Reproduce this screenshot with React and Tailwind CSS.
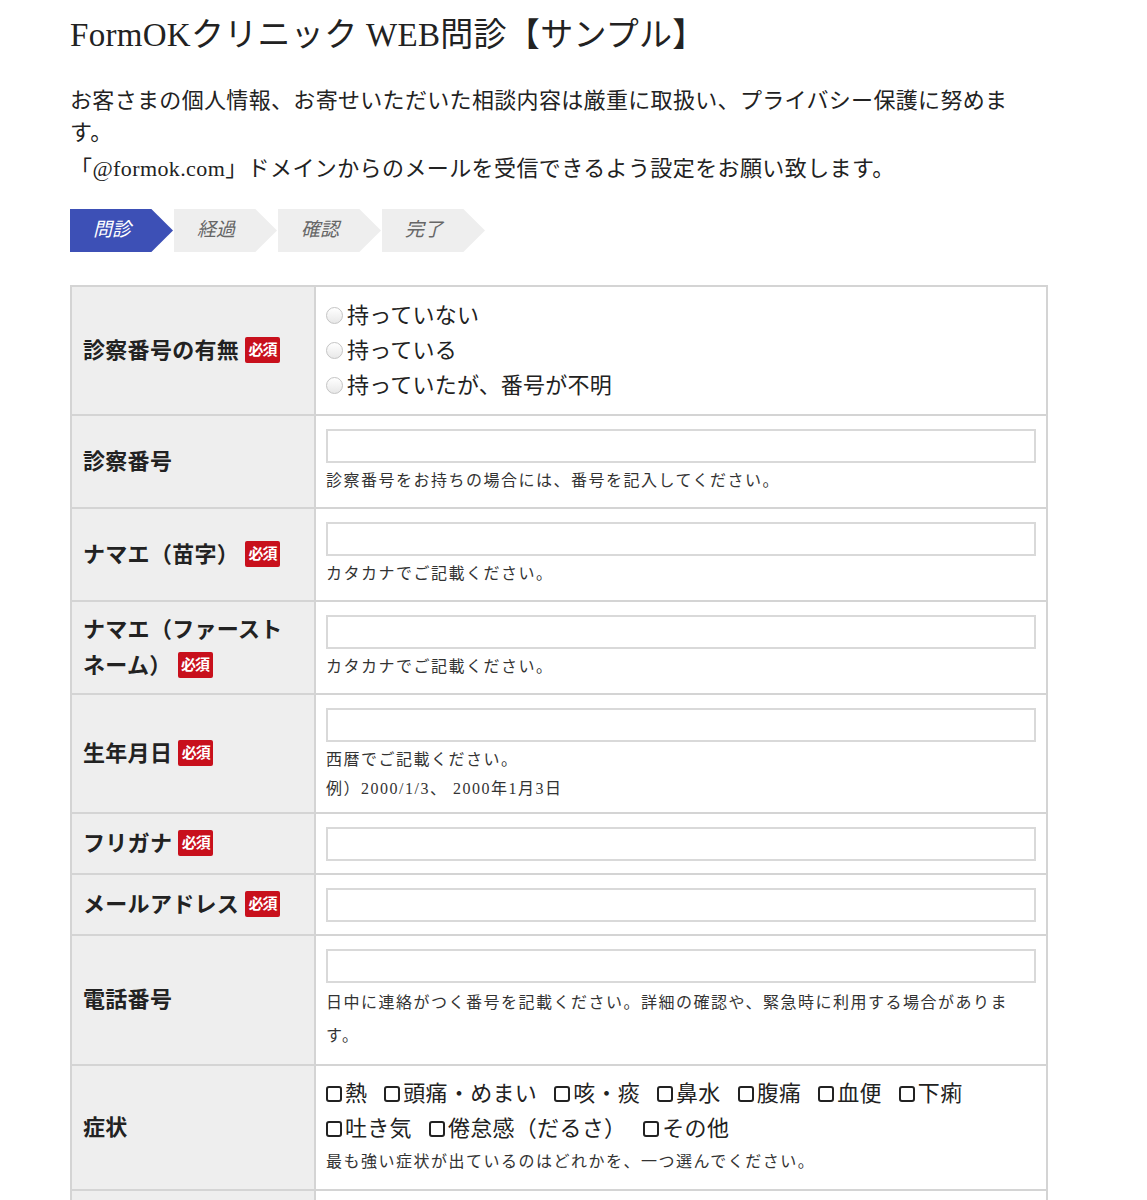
const radioOptions = ["持っていない", "持っている", "持っていたが、番号が不明"];

const symptoms = [
  "熱",
  "頭痛・めまい",
  "咳・痰",
  "鼻水",
  "腹痛",
  "血便",
  "下痢",
  "吐き気",
  "倦怠感（だるさ）",
  "その他",
];

const steps = ["問診", "経過", "確認", "完了"];

function Badge() {
  return (
    <span className="inline-block align-middle ml-[6px] w-[35px] h-[26px] leading-[26px] text-center rounded-[2px] bg-[#c8101c] text-white text-[15px] font-bold tracking-[-1px] relative top-[-2px]">
      必須
    </span>
  );
}

function TextBox() {
  return <div className="h-[34px] w-full border-2 border-[#d9d9d9] bg-white"></div>;
}

function Help({ children, leading = "leading-[29px]" }) {
  return (
    <p className={`mt-[3px] text-[16px] tracking-[1.5px] text-[#333] ${leading}`}>
      {children}
    </p>
  );
}

function Row({ label, required, children, pad = "pt-[13px] pb-[12px]", first }) {
  return (
    <div className={`flex ${first ? "" : "border-t-2 border-[#d4d4d4]"}`}>
      <div className="w-[244px] shrink-0 bg-[#eeeeee] border-r-2 border-[#d4d4d4] flex items-center pl-[11px] pr-[12px]">
        <div className="text-[22px] font-bold leading-[36px] tracking-[0.3px] text-[#222]">
          {label}
          {required && <Badge />}
        </div>
      </div>
      <div className={`flex-1 pl-[10px] pr-[10px] ${pad}`}>{children}</div>
    </div>
  );
}

export default function App() {
  return (
    <div className="min-h-[1200px] bg-white text-[#222] font-['Liberation_Serif','Noto_Sans_CJK_JP',serif]">
      <div className="w-[978px] ml-[70px] pt-[14px]">
        <h1 className="text-[33px] leading-[42px] font-normal tracking-[0.3px] text-[#222]">
          FormOKクリニック WEB問診【サンプル】
        </h1>

        <p className="mt-[29px] text-[22px] leading-[32px] tracking-[0.33px]">
          お客さまの個人情報、お寄せいただいた相談内容は厳重に取扱い、プライバシー保護に努めます。
        </p>
        <p className="mt-1 text-[22px] leading-[32px] tracking-[0.4px]">
          「@formok.com」ドメインからのメールを受信できるよう設定をお願い致します。
        </p>

        <div className="mt-[24px] flex gap-[1px]">
          {steps.map((s, i) => (
            <div
              key={s}
              className={`w-[103px] h-[43px] flex items-center pl-[23px] italic text-[19px] [clip-path:polygon(0_0,79%_0,100%_50%,79%_100%,0_100%)] ${
                i === 0 ? "bg-[#3d50b6] text-white" : "bg-[#eeeeee] text-[#666]"
              }`}
            >
              {s}
            </div>
          ))}
        </div>

        <div className="mt-[33px] border-2 border-[#d4d4d4]">
          <Row label="診察番号の有無" required first pad="py-[11px]">
            {radioOptions.map((o) => (
              <div key={o} className="flex items-center text-[22px] leading-[35px] tracking-[0.2px]">
                <span className="shrink-0 w-[17px] h-[17px] rounded-full border border-[#c4c4c4] bg-gradient-to-b from-white to-[#e8e8e8] mr-[4px]"></span>
                {o}
              </div>
            ))}
          </Row>

          <Row label="診察番号">
            <TextBox />
            <Help>診察番号をお持ちの場合には、番号を記入してください。</Help>
          </Row>

          <Row label="ナマエ（苗字）" required>
            <TextBox />
            <Help>カタカナでご記載ください。</Help>
          </Row>

          <Row label="ナマエ（ファーストネーム）" required>
            <TextBox />
            <Help>カタカナでご記載ください。</Help>
          </Row>

          <Row label="生年月日" required pad="pt-[13px] pb-[9px]">
            <TextBox />
            <Help>
              西暦でご記載ください。
              <br />
              例）2000/1/3、 2000年1月3日
            </Help>
          </Row>

          <Row label="フリガナ" required>
            <TextBox />
          </Row>

          <Row label="メールアドレス" required>
            <TextBox />
          </Row>

          <Row label="電話番号" pad="pt-[13px] pb-[12px]">
            <TextBox />
            <Help leading="leading-[33px]">
              日中に連絡がつく番号を記載ください。詳細の確認や、緊急時に利用する場合があります。
            </Help>
          </Row>

          <Row label="症状" pad="pt-[10px] pb-[11px]">
            <div className="flex flex-wrap gap-x-[17px] text-[22px] leading-[35px] tracking-[0.3px]">
              {symptoms.map((s) => (
                <span key={s} className="flex items-center">
                  <span className="shrink-0 w-[16px] h-[16px] rounded-[3px] border-2 border-[#222] mr-[3px]"></span>
                  {s}
                </span>
              ))}
            </div>
            <p className="text-[16px] tracking-[1.5px] leading-[32px] text-[#333]">
              最も強い症状が出ているのはどれかを、一つ選んでください。
            </p>
          </Row>

          <Row label="いつから" required>
            <TextBox />
            <Help>おおよその日付をご記載ください。</Help>
          </Row>
        </div>
        <div className="h-[40px]"></div>
      </div>
    </div>
  );
}
